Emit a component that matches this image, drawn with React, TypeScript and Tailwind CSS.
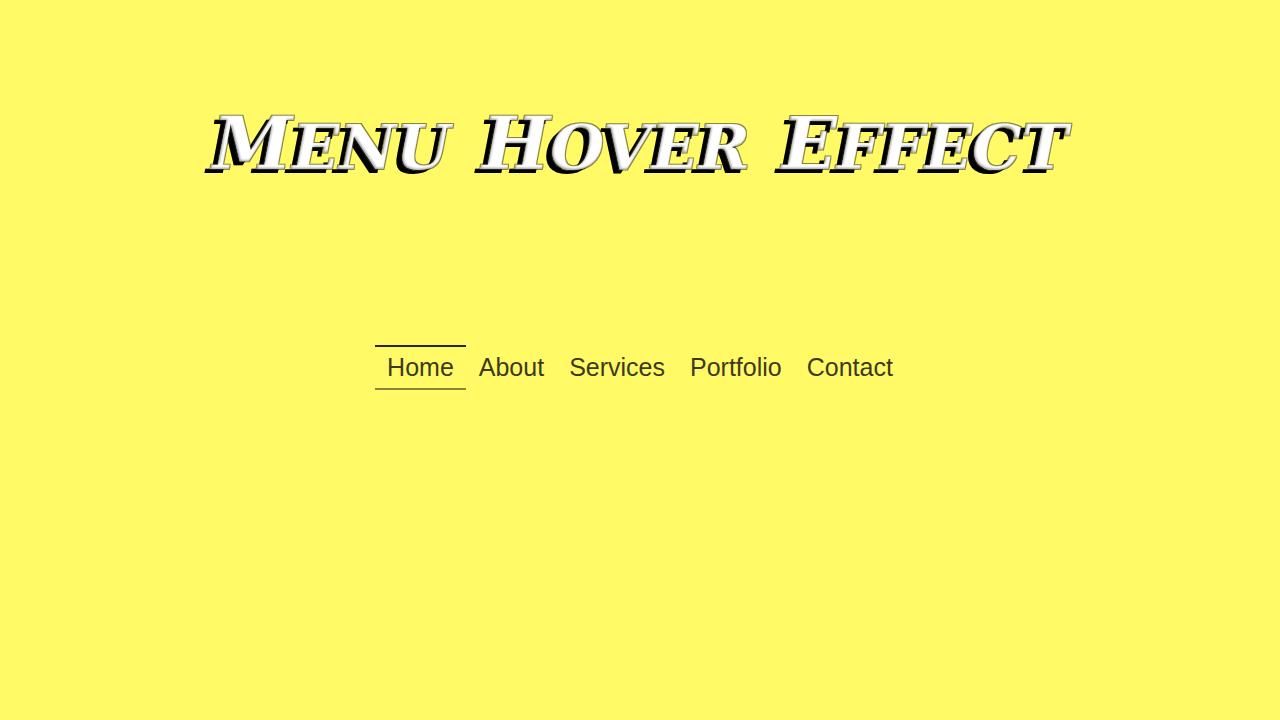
import React, { useState } from 'react';

const TITLE_WORDS = ['Menu', 'Hover', 'Effect'];

const MENU_ITEMS = ['Home', 'About', 'Services', 'Portfolio', 'Contact'];

// Rounded bevel, thin outline and hard drop shadow for the heading
const BevelFilter: React.FC = () => (
  <svg width="0" height="0" className="absolute" aria-hidden="true">
    <filter id="bevel" x="-5%" y="-20%" width="110%" height="140%" colorInterpolationFilters="sRGB">
      <feOffset in="SourceAlpha" dx="-6" dy="4" result="drop" />
      <feMorphology in="SourceAlpha" operator="dilate" radius="1" result="fat" />
      <feFlood floodColor="#3a3820" floodOpacity="0.6" />
      <feComposite in2="fat" operator="in" result="outline" />
      <feOffset in="SourceAlpha" dx="1" dy="-1" />
      <feGaussianBlur stdDeviation="1" result="soft" />
      <feFlood floodColor="#6c6c78" floodOpacity="0.7" />
      <feComposite in2="soft" operator="out" />
      <feComposite in2="SourceAlpha" operator="in" result="shade" />
      <feMerge>
        <feMergeNode in="drop" />
        <feMergeNode in="outline" />
        <feMergeNode in="SourceGraphic" />
        <feMergeNode in="shade" />
      </feMerge>
    </filter>
  </svg>
);

const App: React.FC = () => {
  const [active, setActive] = useState('Home');

  return (
    <div className="min-h-screen bg-[#fffa66] flex flex-col items-center font-['Liberation_Sans',Arial,sans-serif]">
      <BevelFilter />

      <h1 className="mt-24 flex items-baseline gap-8 whitespace-nowrap uppercase italic font-bold text-white text-[72px] leading-[96px] font-['DejaVu_Serif',serif] [filter:url(#bevel)]">
        {TITLE_WORDS.map((word) => (
          <span key={word}>
            {word[0]}
            <span className="text-[62px]">{word.slice(1)}</span>
          </span>
        ))}
      </h1>

      <nav className="mt-[149px]">
        <ul className="flex gap-px">
          {MENU_ITEMS.map((item) => (
            <li key={item}>
              <a
                href={`#${item.toLowerCase()}`}
                onMouseEnter={() => setActive(item)}
                className={`block px-3 py-1 border-y-2 text-[25px] leading-[33px] text-[#3d3a1c] ${
                  active === item ? 'border-t-[#29260a] border-b-[#8a8638]' : 'border-transparent'
                }`}
              >
                {item}
              </a>
            </li>
          ))}
        </ul>
      </nav>
    </div>
  );
};

export default App;
